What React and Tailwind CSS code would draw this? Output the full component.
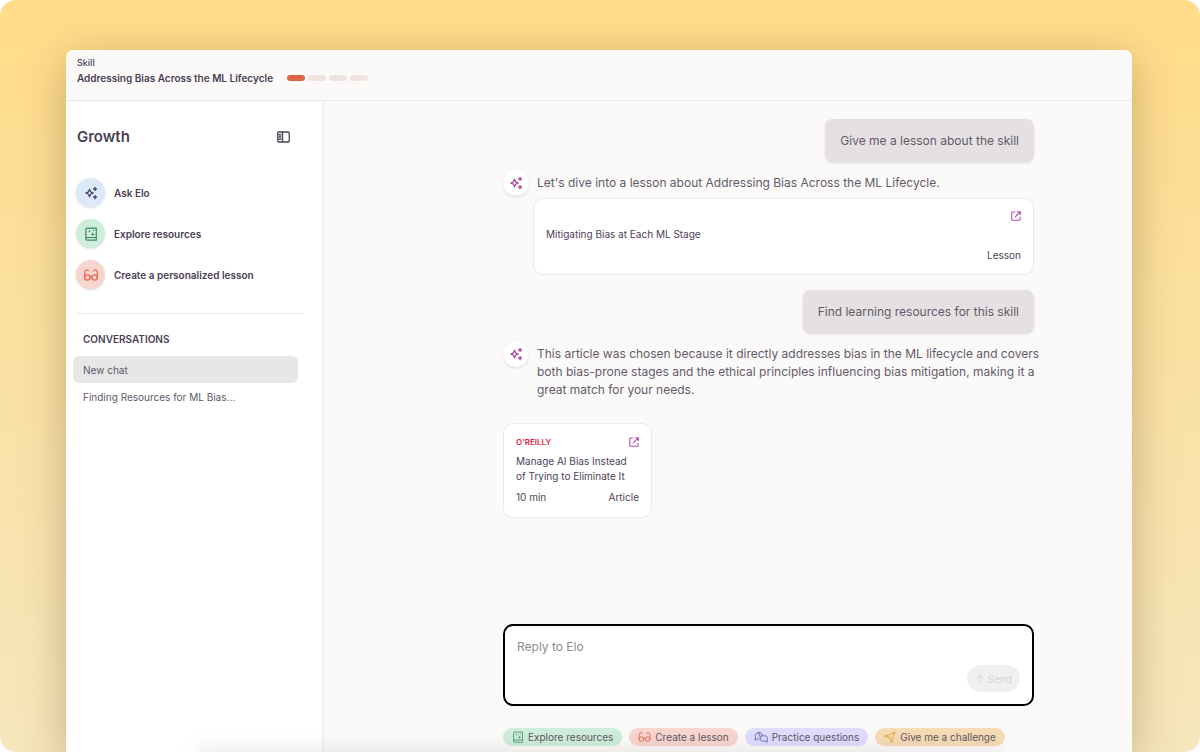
// App.jsx

import React from 'react';

function SparkleIcon({ className }) {
  return (
    <svg viewBox="0 0 24 24" fill="none" stroke="currentColor" strokeWidth="2" strokeLinejoin="round" className={className} aria-hidden="true">
      <path d="M9.5 5.5 L11.4 10.1 L16 12 L11.4 13.9 L9.5 18.5 L7.6 13.9 L3 12 L7.6 10.1 Z" />
      <path d="M19 1.5 V8.5 M15.5 5 H22.5 M19 15.5 V22.5 M15.5 19 H22.5" strokeWidth="2.2" />
    </svg>
  );
}

function BookIcon({ className }) {
  return (
    <svg viewBox="0 0 24 24" fill="none" stroke="currentColor" strokeWidth="2" strokeLinejoin="round" className={className} aria-hidden="true">
      <path d="M21 18 H5.5 A2.2 2.2 0 0 0 5.5 22.5 H21 V2 H5.5 A2.2 2.2 0 0 0 3.2 4.2 V20.2" />
      <path fill="currentColor" stroke="none" d="M15 9 L16 11.5 L18.5 12.5 L16 13.5 L15 16 L14 13.5 L11.5 12.5 L14 11.5 Z M9.5 5 L10.3 6.8 L12 7.5 L10.3 8.2 L9.5 10 L8.7 8.2 L7 7.5 L8.7 6.8 Z M15.5 4.8 h2 v2 h-2 Z" />
    </svg>
  );
}

function GlassesIcon({ className }) {
  return (
    <svg viewBox="0 0 24 24" fill="none" stroke="currentColor" strokeWidth="2" strokeLinecap="round" className={className} aria-hidden="true">
      <circle cx="5.8" cy="16.3" r="4.6" />
      <circle cx="18.2" cy="16.3" r="4.6" />
      <path d="M10.4 15.5 Q12 14 13.6 15.5 M1.2 16 V9 Q1.4 3 5 3 Q7 3 7.2 5.2 M22.8 16 V9 Q22.6 3 19 3 Q17 3 16.8 5.2" />
    </svg>
  );
}

function ChatIcon({ className }) {
  return (
    <svg viewBox="0 0 28 24" fill="none" stroke="currentColor" strokeWidth="1.8" strokeLinejoin="round" strokeLinecap="round" className={className} aria-hidden="true">
      <path d="M10.5 16.5 L6.5 16 L2 18.5 L3 13.5 A7.5 7.5 0 1 1 17 7" />
      <path d="M7.5 6.5 A2.3 2.3 0 1 1 10 9 V10.5 M10 13 V13.2" />
      <path d="M15 9.5 H22.5 A4 4 0 0 1 26.5 13.5 V22.5 L22.5 20 H17 A3.7 3.7 0 0 1 13.2 16.3 V11.5 Q13.2 9.5 15 9.5 Z" />
    </svg>
  );
}

function ChallengeIcon({ className }) {
  return (
    <svg viewBox="0 0 24 24" fill="none" stroke="currentColor" strokeWidth="2" strokeLinejoin="round" className={className} aria-hidden="true">
      <path d="M18.5 4.5 L3 10 L10.5 13 L15 20 L20 6" />
      <circle cx="20" cy="4" r="2.3" />
      <circle cx="15.5" cy="20.5" r="2" />
      <circle cx="3.2" cy="10.3" r="2" />
      <circle cx="11" cy="13" r="1" />
    </svg>
  );
}

function ExternalIcon() {
  return (
    <svg viewBox="0 0 20 20" fill="none" stroke="currentColor" strokeWidth="2.2" strokeLinejoin="round" className="w-2.5 h-2.5" aria-hidden="true">
      <path d="M8.5 2 H3 Q1.5 2 1.5 3.5 V17 Q1.5 18.5 3 18.5 H16.5 Q18 18.5 18 17 V11.5" />
      <path d="M12 1.5 H18.7 V8.2 M18.5 1.7 L8 12.2" />
    </svg>
  );
}

function PanelIcon() {
  return (
    <svg viewBox="0 0 26 24" fill="none" stroke="currentColor" strokeWidth="2.6" strokeLinejoin="round" className="w-[13px] h-3" aria-hidden="true">
      <rect x="1.5" y="2" width="23" height="20" rx="2" />
      <path d="M11 2 V22 M3 7.5 H8.5 M3 12 H8.5 M3 16.5 H8.5" />
    </svg>
  );
}

const shortcuts = [
  { label: 'Ask Elo', icon: SparkleIcon, color: 'bg-[#dce9f8] text-[#403a68]' },
  { label: 'Explore resources', icon: BookIcon, color: 'bg-[#cfeddb] text-[#38875a]' },
  { label: 'Create a personalized lesson', icon: GlassesIcon, color: 'bg-[#f8d5ce] text-[#ea6250]' },
];

const chips = [
  { label: 'Explore resources', icon: BookIcon, color: 'bg-[#cfeddb]', iconColor: 'w-3 text-[#5aa27a]' },
  { label: 'Create a lesson', icon: GlassesIcon, color: 'bg-[#f8d5ce]', iconColor: 'w-[13px] text-[#ea6e5d]' },
  { label: 'Practice questions', icon: ChatIcon, color: 'bg-[#dfdcff]', iconColor: 'w-3.5 text-[#6d69ad]' },
  { label: 'Give me a challenge', icon: ChallengeIcon, color: 'bg-[#f5dcb5]', iconColor: 'w-3 text-[#e6ab45]' },
];

function Header() {
  return (
    <header className="h-[51px] shrink-0 border-b border-[#e9e8e8] bg-[#fbfaf9] px-[11px] pt-[7px]">
      <div className="text-[9px] leading-3 font-medium">Skill</div>
      <div className="flex items-center gap-3.5">
        <h1 className="text-[10px] leading-[18px] font-semibold">Addressing Bias Across the ML Lifecycle</h1>
        <div className="flex gap-[3px]">
          <span className="w-[18px] h-1.5 rounded-full bg-[#dd6345]"></span>
          <span className="w-[18px] h-1.5 rounded-full bg-[#f1e4e0]"></span>
          <span className="w-[18px] h-1.5 rounded-full bg-[#f1e4e0]"></span>
          <span className="w-[18px] h-1.5 rounded-full bg-[#f1e4e0]"></span>
        </div>
      </div>
    </header>
  );
}

function Sidebar() {
  return (
    <aside className="w-[258px] shrink-0 border-r-2 border-[#f3f3f5] bg-white">
      <div className="flex items-center justify-between pt-6 pl-[11px] pr-8">
        <h2 className="text-[15px] leading-6 font-semibold">Growth</h2>
        <button aria-label="Toggle sidebar">
          <PanelIcon />
        </button>
      </div>

      <nav className="mt-[29px] flex flex-col items-start gap-3 pl-2.5">
        {shortcuts.map(({ label, icon: Icon, color }) => (
          <button key={label} className="flex items-center gap-[9px] text-[10px] leading-4 font-semibold">
            <span className={`flex items-center justify-center w-[29px] h-[29px] rounded-full shadow-sm ${color}`}>
              <Icon className="w-3.5 h-3.5" />
            </span>
            {label}
          </button>
        ))}
      </nav>

      <hr className="mt-6 ml-2.5 mr-[18px] border-[#ebebeb]" />

      <h3 className="mt-[17px] ml-[17px] text-[10px] leading-4 font-semibold">CONVERSATIONS</h3>
      <div className="mt-[9px] ml-[7px] mr-6 flex flex-col text-[10px] leading-4 text-[#5f5767]">
        <button className="h-[27px] rounded-md bg-[#e7e7e8] px-2.5 text-left">New chat</button>
        <button className="h-[27px] rounded-md px-2.5 text-left">Finding Resources for ML Bias...</button>
      </div>
    </aside>
  );
}

function UserMessage({ children }) {
  return (
    <div className="self-end rounded-lg bg-[#e5e1e2] px-[15px] py-3 leading-[19px] shadow-sm">{children}</div>
  );
}

function EloMessage({ children }) {
  return (
    <div className="mt-2 -mr-2 flex gap-2">
      <span className="flex items-center justify-center shrink-0 w-[26px] h-[26px] rounded-full bg-white text-[#a93a9c] shadow-sm">
        <SparkleIcon className="w-3.5 h-3.5" />
      </span>
      <p className="pt-1">{children}</p>
    </div>
  );
}

function Composer() {
  return (
    <div className="mt-auto mb-1.5">
      <form className="flex flex-col rounded-[10px] border-2 border-black bg-white p-3">
        <textarea
          aria-label="Reply to Elo"
          placeholder="Reply to Elo"
          rows={1}
          className="h-[27px] resize-none outline-none placeholder:text-[#8f8a93]"
        />
        <button
          type="button"
          disabled
          className="flex items-center gap-[3px] self-end h-[27px] rounded-full bg-[#f0f0f2] px-2 text-[10px] text-[#d7d2d7]"
        >
          <svg viewBox="0 0 24 24" fill="none" stroke="currentColor" strokeWidth="2.4" className="w-2.5 h-2.5" aria-hidden="true">
            <path d="M12 23 V2 M3 11 L12 2 L21 11" />
          </svg>
          Send
        </button>
      </form>
      <div className="mt-[22px] flex gap-[7px] whitespace-nowrap">
        {chips.map(({ label, icon: Icon, color, iconColor }) => (
          <button key={label} className={`flex items-center gap-1 h-[18px] rounded-full px-[9px] text-[10px] text-[#5f5767] ${color}`}>
            <Icon className={`h-3 ${iconColor}`} />
            {label}
          </button>
        ))}
      </div>
    </div>
  );
}

function Chat() {
  return (
    <main className="flex flex-1 min-w-0 flex-col pt-[18px] pl-[179px] pr-[98px] text-[12px] leading-[18px] text-[#635b6a]">
      <UserMessage>Give me a lesson about the skill</UserMessage>
      <EloMessage>Let's dive into a lesson about Addressing Bias Across the ML Lifecycle.</EloMessage>

      <article className="mt-0.5 ml-[30px] rounded-[10px] border border-[#ebeaeb] bg-white px-3 pt-3 pb-[10px] text-[10px] text-[#4d4257]">
        <a href="#lesson" aria-label="Open lesson" className="flex justify-end text-[#b54ca9]">
          <ExternalIcon />
        </a>
        <h4 className="mt-1">Mitigating Bias at Each ML Stage</h4>
        <div className="mt-[3px] text-right">Lesson</div>
      </article>

      <div className="mt-[15px] flex flex-col">
        <UserMessage>Find learning resources for this skill</UserMessage>
      </div>
      <EloMessage>
        This article was chosen because it directly addresses bias in the ML lifecycle and covers both bias-prone stages
        and the ethical principles influencing bias mitigation, making it a great match for your needs.
      </EloMessage>

      <article className="mt-6 w-[149px] rounded-[10px] border border-[#ebeaeb] bg-white px-3 py-3 text-[10px] leading-[15px] text-[#4d4257]">
        <div className="flex items-center justify-between">
          <span className="text-[8px] leading-3 font-semibold text-[#dc2440]">O'REILLY</span>
          <a href="#article" aria-label="Open article" className="text-[#b54ca9]">
            <ExternalIcon />
          </a>
        </div>
        <h4 className="mt-1.5">Manage AI Bias Instead of Trying to Eliminate It</h4>
        <div className="mt-1.5 flex justify-between">
          <span>10 min</span>
          <span>Article</span>
        </div>
      </article>

      <Composer />
    </main>
  );
}

export default function App() {
  return (
    <div className="min-h-screen bg-white">
      <div className="flex min-h-screen flex-col overflow-hidden rounded-2xl bg-linear-to-b from-[#ffdc88] to-[#f6e6bd] pt-[50px] pl-[66px] pr-[68px] font-['Inter',sans-serif] text-[#4a3f54]">
        <div className="flex flex-1 flex-col rounded-t-lg shadow-[0_10px_44px_rgba(120,90,50,0.4)]">
          <div className="relative flex flex-1 flex-col overflow-hidden rounded-t-lg bg-[#fbfaf9]">
            <Header />
            <div className="flex flex-1">
              <Sidebar />
              <Chat />
            </div>
            <div className="pointer-events-none absolute inset-x-[130px] -bottom-2 h-2 shadow-[0_0_22px_rgba(0,0,0,0.18)]"></div>
          </div>
        </div>
      </div>
    </div>
  );
}
